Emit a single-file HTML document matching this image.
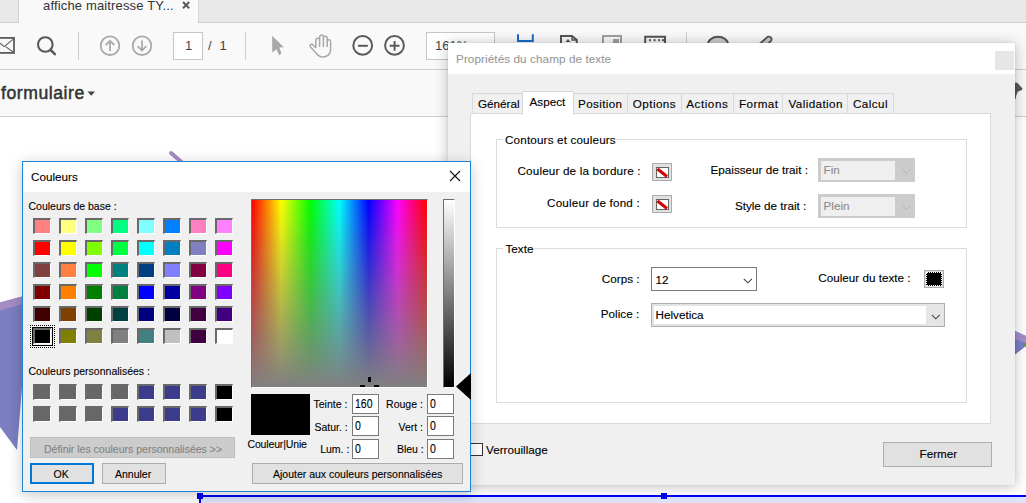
<!DOCTYPE html>
<html><head><meta charset="utf-8">
<style>
*{box-sizing:border-box;margin:0;padding:0}
html,body{width:1026px;height:503px;overflow:hidden;background:#fff;position:relative;font-family:"Liberation Sans",sans-serif;color:#000}
.a{position:absolute}
.t{position:absolute;white-space:pre;line-height:normal}
.f12{font-size:11.7px;-webkit-text-stroke:0.12px currentColor}
.f10{font-size:10.5px;-webkit-text-stroke:0.1px currentColor}
.sw{width:18px;height:16px;border-top:2px solid #696969;border-left:2px solid #696969;border-right:1px solid #fff;border-bottom:1px solid #fff}
.dg{transform:scaleY(1.2);transform-origin:0 9.5px}
.inp{width:27px;height:20px;background:#fff;border:1px solid #7a7a7a}
</style></head><body>
<!-- ===== background app ===== -->
<div class="a" style="left:0;top:0;width:1026px;height:23px;background:#e8e8e8"></div>
<div class="a" style="left:0;top:22px;width:1026px;height:1px;background:#cfcfcf"></div>
<div class="a" style="left:18px;top:0;width:1px;height:22px;background:#d2d2d2"></div>
<div class="a" style="left:19px;top:0;width:179px;height:23px;background:#f9f9f9"></div>
<div class="a" style="left:198px;top:0;width:1px;height:22px;background:#d6d6d6"></div>
<div class="t" style="left:43px;top:-2px;font-size:13px;color:#333;letter-spacing:0.155px">affiche maitresse TY...</div>
<svg class="a" style="left:180.5px;top:-0.5px" width="10" height="10"><path d="M2 2 L8.2 8.2 M8.2 2 L2 8.2" stroke="#5a5a5a" stroke-width="2"/></svg>
<div class="a" style="left:0;top:23px;width:1026px;height:46px;background:#f9f9f9"></div>
<div class="a" style="left:0;top:69px;width:1026px;height:1px;background:#cdcdcd"></div>
<div class="a" style="left:0;top:70px;width:1026px;height:46px;background:#f9f9f9"></div>
<div class="a" style="left:0;top:116px;width:1026px;height:1px;background:#cdcdcd"></div>
<div class="t" style="left:1px;top:83px;font-size:17.6px;color:#333;-webkit-text-stroke:0.5px #333;letter-spacing:0.55px">formulaire</div>
<svg class="a" style="left:86.5px;top:91px" width="9" height="6"><polygon points="0.5,0.5 8,0.5 4.25,4.8" fill="#444"/></svg>

<!-- toolbar icons -->
<svg class="a" style="left:0;top:0" width="1026" height="117">
 <g fill="none" stroke="#5c5c5c" stroke-width="1.8">
  <rect x="-6" y="37.9" width="20" height="15" />
 </g>
 <g fill="none" stroke="#5c5c5c" stroke-width="1.1">
  <path d="M13.5 38.8 L4.2 46.6 L0 43.2 M5.6 46.6 L13.5 52.2"/>
 </g>
 <circle cx="45.3" cy="44.5" r="7.3" fill="none" stroke="#5a5a5a" stroke-width="2.1"/>
 <path d="M50.5 49.8 L54.8 54.2" stroke="#5a5a5a" stroke-width="2.6" stroke-linecap="round"/>
 <rect x="78" y="32" width="1" height="28" fill="#cfcfcf"/>
 <g fill="none" stroke="#a9a9a9" stroke-width="1.8">
  <circle cx="110" cy="45.7" r="9.3"/>
  <path d="M110 51 V40.8 M105.6 45.2 L110 40.8 L114.4 45.2"/>
  <circle cx="142" cy="45.7" r="9.3"/>
  <path d="M142 40.4 V50.6 M137.6 46.2 L142 50.6 L146.4 46.2"/>
 </g>
 <rect x="173.5" y="32.5" width="29" height="27" fill="#fff" stroke="#c6c6c6"/>
 <rect x="245" y="32" width="1" height="28" fill="#cfcfcf"/>
 <polygon points="272.2,35.8 283.9,47.3 279.4,47.6 281.4,53.4 279,55.4 276.6,49.2 272.2,52.6" fill="#a9a9a9"/>
 <g fill="none" stroke="#a9a9a9" stroke-width="1.5" stroke-linejoin="round">
  <path d="M315.8 48 V40.2 a1.9 1.9 0 0 1 3.8 0 V37 a1.9 1.9 0 0 1 3.8 0 V38.2 a1.9 1.9 0 0 1 3.8 0 V41.5 a1.7 1.7 0 0 1 3.4 0 V50 c0 4.2 -3.6 7 -7.8 7 c-3 0 -5 -1.6 -6.6 -3.8 L310.3 46.8 a1.6 1.6 0 0 1 2.6 -1.9 L315.8 48"/>
  <path d="M319.6 40.2 V47 M323.4 38.2 V47 M327.2 41.5 V47"/>
 </g>
 <g fill="none" stroke="#5a5a5a" stroke-width="2">
  <circle cx="362.7" cy="45.4" r="9.4"/>
  <path d="M358 45.8 H367.8"/>
  <circle cx="394.5" cy="45.4" r="9.4"/>
  <path d="M389.7 45.8 H399.5 M394.6 41 V50.8"/>
 </g>
 <rect x="426.5" y="32.5" width="68" height="27" fill="#fff" stroke="#c6c6c6"/>
 <path d="M518 34.2 V41 H532.8 V34.2" fill="none" stroke="#1a6ac8" stroke-width="2"/>
 <path d="M561 43 V36 H572 L576.8 40 V43" fill="none" stroke="#555" stroke-width="2"/>
 <path d="M572 36 V40 H576.8" fill="none" stroke="#555" stroke-width="1.4"/>
 <polygon points="565.5,42 568,39 570.5,42" fill="#555"/>
 <path d="M603 43 V36 H621 V43" fill="none" stroke="#9f9f9f" stroke-width="2"/>
 <rect x="613" y="39" width="6" height="4" fill="#9f9f9f"/>
 <path d="M645.2 43.5 V36.8 H665 V43.5" fill="none" stroke="#555" stroke-width="2"/>
 <g fill="#555"><rect x="649" y="39.2" width="2" height="2"/><rect x="653.6" y="39.2" width="2" height="2"/><rect x="658.2" y="39.2" width="2" height="2"/><rect x="662" y="39.2" width="2" height="2"/></g>
 <rect x="686" y="32" width="1" height="12" fill="#cfcfcf"/>
 <path d="M708 44.5 A10 7.8 0 0 1 728 44.5" fill="#cdcdcd" stroke="#555" stroke-width="2"/>
 <path d="M759 44.5 L766.5 37.8 A2.5 2.5 0 0 1 771 40.8 L767 44.5" fill="#cdcdcd" stroke="#555" stroke-width="1.8"/>
 <polygon points="1015,82.4 1017.2,82.8 1022.5,88.4 1022,90 1018,91.4 1016.4,95 1015.6,99.2 1015,99.2" fill="#585858"/>
</svg>
<div class="t" style="left:185px;top:38px;font-size:13px;color:#444">1</div>
<div class="t" style="left:208px;top:38px;font-size:13px;color:#444">/</div>
<div class="t" style="left:219.5px;top:38px;font-size:13px;color:#444">1</div>
<div class="t" style="left:435px;top:38px;font-size:13px;color:#444">161%</div>

<!-- purple shapes -->
<svg class="a" style="left:0;top:117px" width="1026" height="386">
  <polygon points="0,185.4 29.4,177.5 17,333 0,310" fill="#7b7ec0"/>
  <polygon points="0,185.4 29.4,177.5 29.4,185 0,193.7" fill="#a48cc4"/>
  <path d="M171 36 L181.5 45" stroke="#a58bc8" stroke-width="4" stroke-linecap="round"/>
  <polygon points="1010,211.7 1026,219 1026,229 1010,241.4" fill="#7680c6"/>
  <polygon points="1010,211.7 1026,219 1026,226 1010,220.2" fill="#a38dc8"/>
  <polygon points="1023.5,226.3 1026,226 1026,229.5 1023.5,229" fill="#5c9c48"/>
</svg>
<!-- selection bottom -->
<div class="a" style="left:201px;top:497px;width:825px;height:6px;background:#dce3fa"></div>
<div class="a" style="left:200px;top:495px;width:826px;height:2px;background:#0000f4"></div>
<div class="a" style="left:199px;top:495px;width:2px;height:8px;background:#0000f4"></div>
<div class="a" style="left:197px;top:493px;width:6px;height:6px;background:#0000f4"></div>
<div class="a" style="left:661px;top:493px;width:6px;height:6px;background:#0000f4"></div>

<!-- ===== properties dialog ===== -->
<div id="pd" class="a" style="left:448px;top:43px;width:567px;height:442px;background:#f0f0f0;box-shadow:0 0 2px rgba(0,0,0,0.10),0 1px 13px rgba(0,0,0,0.26)">
  <div class="a" style="left:0;top:0;width:567px;height:31px;background:#fff"></div>
  <div class="t f12" style="left:8px;top:9px;color:#999;letter-spacing:0.09px">Propriétés du champ de texte</div>
  <div class="a" style="left:547px;top:8px;width:19px;height:19px;background:#e6e6e6"></div>
</div>

<!-- PD content -->
<div class="a" style="left:470px;top:113px;width:521px;height:311px;background:#fff;border:1px solid #d9d9d9"></div>
<div class="a" style="left:472px;top:93px;width:51px;height:21px;background:#f0f0f0;border:1px solid #d9d9d9"></div>
<div class="t f12" style="left:478.0px;top:97px">Général</div>
<div class="a" style="left:573px;top:93px;width:55px;height:21px;background:#f0f0f0;border:1px solid #d9d9d9"></div>
<div class="t f12" style="left:578.1px;top:97px;letter-spacing:0.35px">Position</div>
<div class="a" style="left:627px;top:93px;width:55px;height:21px;background:#f0f0f0;border:1px solid #d9d9d9"></div>
<div class="t f12" style="left:632.7px;top:97px;letter-spacing:0.45px">Options</div>
<div class="a" style="left:681px;top:93px;width:53px;height:21px;background:#f0f0f0;border:1px solid #d9d9d9"></div>
<div class="t f12" style="left:686.2px;top:97px;letter-spacing:0.55px">Actions</div>
<div class="a" style="left:733px;top:93px;width:50px;height:21px;background:#f0f0f0;border:1px solid #d9d9d9"></div>
<div class="t f12" style="left:739.0px;top:97px;letter-spacing:0.4px">Format</div>
<div class="a" style="left:782px;top:93px;width:66px;height:21px;background:#f0f0f0;border:1px solid #d9d9d9"></div>
<div class="t f12" style="left:788.5px;top:97px;letter-spacing:0.38px">Validation</div>
<div class="a" style="left:847px;top:93px;width:47px;height:21px;background:#f0f0f0;border:1px solid #d9d9d9"></div>
<div class="t f12" style="left:853.0px;top:97px;letter-spacing:0.4px">Calcul</div>
<div class="a" style="left:522px;top:91px;width:52px;height:24px;background:#fff;border:1px solid #d9d9d9;border-bottom:none"></div>
<div class="t f12" style="left:529.5px;top:95px">Aspect</div>
<div class="a" style="left:496px;top:139px;width:471px;height:89px;border:1px solid #dcdcdc"></div>
<div class="a" style="left:503px;top:132px;width:113px;height:14px;background:#fff"></div>
<div class="t f12" style="left:505px;top:133px;letter-spacing:0.15px">Contours et couleurs</div>
<div class="a" style="left:496px;top:248px;width:471px;height:155px;border:1px solid #dcdcdc"></div>
<div class="a" style="left:503px;top:241px;width:31px;height:14px;background:#fff"></div>
<div class="t f12" style="left:505.5px;top:242px">Texte</div>
<div class="t f12" style="left:517.5px;top:164px;letter-spacing:0.16px">Couleur de la bordure :</div>
<div class="t f12" style="left:547px;top:196px;letter-spacing:0.19px">Couleur de fond :</div>
<div class="t f12" style="left:710.5px;top:163px">Epaisseur de trait :</div>
<div class="t f12" style="left:734.9px;top:199px">Style de trait :</div>
<div class="t f12" style="left:601.8px;top:271.5px">Corps :</div>
<div class="t f12" style="left:600.8px;top:307px">Police :</div>
<div class="t f12" style="left:818.3px;top:271px">Couleur du texte :</div>
<div class="t f12" style="left:486px;top:443px">Verrouillage</div>
<div class="a" style="left:652px;top:163px;width:20px;height:18px;background:#e1e1e1;border:1px solid #adadad"></div>
<svg class="a" style="left:656px;top:167px" width="13" height="11"><rect x="0.5" y="0.5" width="12" height="10" fill="#fff" stroke="#666"/><path d="M1.5 2 L11 9.5" stroke="#d00000" stroke-width="3"/></svg>
<div class="a" style="left:652px;top:195px;width:20px;height:18px;background:#e1e1e1;border:1px solid #adadad"></div>
<svg class="a" style="left:656px;top:199px" width="13" height="11"><rect x="0.5" y="0.5" width="12" height="10" fill="#fff" stroke="#666"/><path d="M1.5 2 L11 9.5" stroke="#d00000" stroke-width="3"/></svg>
<div class="a" style="left:924px;top:270px;width:20px;height:18px;background:#e1e1e1;border:1px solid #adadad"></div>
<div class="a" style="left:926px;top:272px;width:16px;height:14px;background:#000;outline:1px dotted #fff;outline-offset:-1px"></div>
<div class="a" style="left:818px;top:158px;width:97px;height:24px;background:#cccccc"></div>
<div class="a" style="left:821px;top:161px;width:74px;height:19px;background:#efefef"></div>
<div class="t f12" style="left:823.5px;top:163px;color:#8d8d8d">Fin</div>
<svg class="a" style="left:902px;top:168.5px" width="9" height="5"><path d="M0.5 0.5 L4.5 4.5 L8.5 0.5" fill="none" stroke="#b4b4b4" stroke-width="1"/></svg>
<div class="a" style="left:818px;top:194px;width:97px;height:24px;background:#cccccc"></div>
<div class="a" style="left:821px;top:197px;width:74px;height:19px;background:#efefef"></div>
<div class="t f12" style="left:823.5px;top:199px;color:#8d8d8d">Plein</div>
<svg class="a" style="left:902px;top:204.5px" width="9" height="5"><path d="M0.5 0.5 L4.5 4.5 L8.5 0.5" fill="none" stroke="#b4b4b4" stroke-width="1"/></svg>
<div class="a" style="left:651px;top:267px;width:106px;height:24px;background:#fff;border:1px solid #7a7a7a"></div>
<div class="t f12" style="left:655.5px;top:272.5px">12</div>
<svg class="a" style="left:743px;top:277.5px" width="10" height="6"><path d="M0.8 0.8 L4.8 4.8 L8.8 0.8" fill="none" stroke="#444" stroke-width="1.1"/></svg>
<div class="a" style="left:651px;top:303px;width:294px;height:24px;background:#fff;border:1px solid #adadad;box-shadow:inset 0 0 0 2px #e3e3e3"></div>
<div class="a" style="left:926px;top:305px;width:17px;height:20px;background:#e5e5e5"></div>
<div class="t f12" style="left:655.5px;top:308px">Helvetica</div>
<svg class="a" style="left:931px;top:313.5px" width="10" height="6"><path d="M0.8 0.8 L4.8 4.8 L8.8 0.8" fill="none" stroke="#444" stroke-width="1.1"/></svg>
<div class="a" style="left:470px;top:443px;width:13px;height:13px;background:#fff;border:1px solid #333"></div>
<div class="a" style="left:883px;top:442px;width:109px;height:25px;background:#e1e1e1;border:1px solid #adadad"></div>
<div class="t f12" style="left:919.5px;top:447px">Fermer</div>

<!-- ===== colors dialog ===== -->
<div id="cd" class="a" style="left:22px;top:161px;width:449px;height:331px;background:#f0f0f0;border:1px solid #1f83d6;box-shadow:0 3px 14px rgba(0,0,0,0.22)">
  <div class="a" style="left:0;top:0;width:447px;height:30px;background:#fff"></div>
  </div>
<!-- CD content -->
<div class="t f12" style="left:31px;top:170px">Couleurs</div>
<svg class="a" style="left:449px;top:170px" width="12" height="12"><path d="M1 1 L11 11 M11 1 L1 11" stroke="#111" stroke-width="1.1"/></svg>
<div class="t f10" style="left:28.5px;top:200px">Couleurs de base :</div>
<div class="a sw" style="left:33px;top:218px;background:#FF8080"></div>
<div class="a sw" style="left:59px;top:218px;background:#FFFF80"></div>
<div class="a sw" style="left:85px;top:218px;background:#80FF80"></div>
<div class="a sw" style="left:111px;top:218px;background:#00FF80"></div>
<div class="a sw" style="left:137px;top:218px;background:#80FFFF"></div>
<div class="a sw" style="left:163px;top:218px;background:#0080FF"></div>
<div class="a sw" style="left:189px;top:218px;background:#FF80C0"></div>
<div class="a sw" style="left:215px;top:218px;background:#FF80FF"></div>
<div class="a sw" style="left:33px;top:240px;background:#FF0000"></div>
<div class="a sw" style="left:59px;top:240px;background:#FFFF00"></div>
<div class="a sw" style="left:85px;top:240px;background:#80FF00"></div>
<div class="a sw" style="left:111px;top:240px;background:#00FF40"></div>
<div class="a sw" style="left:137px;top:240px;background:#00FFFF"></div>
<div class="a sw" style="left:163px;top:240px;background:#0080C0"></div>
<div class="a sw" style="left:189px;top:240px;background:#8080C0"></div>
<div class="a sw" style="left:215px;top:240px;background:#FF00FF"></div>
<div class="a sw" style="left:33px;top:262px;background:#804040"></div>
<div class="a sw" style="left:59px;top:262px;background:#FF8040"></div>
<div class="a sw" style="left:85px;top:262px;background:#00FF00"></div>
<div class="a sw" style="left:111px;top:262px;background:#008080"></div>
<div class="a sw" style="left:137px;top:262px;background:#004080"></div>
<div class="a sw" style="left:163px;top:262px;background:#8080FF"></div>
<div class="a sw" style="left:189px;top:262px;background:#800040"></div>
<div class="a sw" style="left:215px;top:262px;background:#FF0080"></div>
<div class="a sw" style="left:33px;top:284px;background:#800000"></div>
<div class="a sw" style="left:59px;top:284px;background:#FF8000"></div>
<div class="a sw" style="left:85px;top:284px;background:#008000"></div>
<div class="a sw" style="left:111px;top:284px;background:#008040"></div>
<div class="a sw" style="left:137px;top:284px;background:#0000FF"></div>
<div class="a sw" style="left:163px;top:284px;background:#0000A0"></div>
<div class="a sw" style="left:189px;top:284px;background:#800080"></div>
<div class="a sw" style="left:215px;top:284px;background:#8000FF"></div>
<div class="a sw" style="left:33px;top:306px;background:#400000"></div>
<div class="a sw" style="left:59px;top:306px;background:#804000"></div>
<div class="a sw" style="left:85px;top:306px;background:#004000"></div>
<div class="a sw" style="left:111px;top:306px;background:#004040"></div>
<div class="a sw" style="left:137px;top:306px;background:#000080"></div>
<div class="a sw" style="left:163px;top:306px;background:#000040"></div>
<div class="a sw" style="left:189px;top:306px;background:#400040"></div>
<div class="a sw" style="left:215px;top:306px;background:#400080"></div>
<div class="a sw" style="left:33px;top:328px;background:#000000"></div>
<div class="a sw" style="left:59px;top:328px;background:#808000"></div>
<div class="a sw" style="left:85px;top:328px;background:#808040"></div>
<div class="a sw" style="left:111px;top:328px;background:#808080"></div>
<div class="a sw" style="left:137px;top:328px;background:#408080"></div>
<div class="a sw" style="left:163px;top:328px;background:#C0C0C0"></div>
<div class="a sw" style="left:189px;top:328px;background:#400040"></div>
<div class="a sw" style="left:215px;top:328px;background:#FFFFFF"></div>
<div class="a" style="left:32px;top:327px;width:21px;height:19px;border:1px solid #000"></div>
<div class="a" style="left:30px;top:325px;width:25px;height:23px;border:1px dotted #000"></div>
<div class="t f10" style="left:28.5px;top:365px">Couleurs personnalisées :</div>
<div class="a sw" style="left:33px;top:384px;background:#676767"></div>
<div class="a sw" style="left:59px;top:384px;background:#676767"></div>
<div class="a sw" style="left:85px;top:384px;background:#676767"></div>
<div class="a sw" style="left:111px;top:384px;background:#676767"></div>
<div class="a sw" style="left:137px;top:384px;background:#3c3c8c"></div>
<div class="a sw" style="left:163px;top:384px;background:#3c3c8c"></div>
<div class="a sw" style="left:189px;top:384px;background:#3c3c8c"></div>
<div class="a sw" style="left:215px;top:384px;background:#000000"></div>
<div class="a sw" style="left:33px;top:406px;background:#676767"></div>
<div class="a sw" style="left:59px;top:406px;background:#676767"></div>
<div class="a sw" style="left:85px;top:406px;background:#676767"></div>
<div class="a sw" style="left:111px;top:406px;background:#3c3c8c"></div>
<div class="a sw" style="left:137px;top:406px;background:#3c3c8c"></div>
<div class="a sw" style="left:163px;top:406px;background:#3c3c8c"></div>
<div class="a sw" style="left:189px;top:406px;background:#3c3c8c"></div>
<div class="a sw" style="left:215px;top:406px;background:#000000"></div>
<div class="a" style="left:30px;top:437px;width:205px;height:21px;background:#cccccc;border:1px solid #bfbfbf"></div>
<div class="t f10" style="left:44px;top:443px;color:#838383">Définir les couleurs personnalisées &gt;&gt;</div>
<div class="a" style="left:30px;top:463px;width:64px;height:21px;background:#e1e1e1;border:2px solid #0078d7"></div>
<div class="t f10" style="left:53.5px;top:468px">OK</div>
<div class="a" style="left:102px;top:463px;width:64px;height:21px;background:#e1e1e1;border:1px solid #adadad"></div>
<div class="t f10" style="left:115px;top:468px">Annuler</div>
<div class="a" style="left:251px;top:199px;width:177px;height:189px;border-top:1px solid #6d6d6d;border-left:1px solid #6d6d6d;border-right:1px solid #fff;border-bottom:1px solid #fff;background:linear-gradient(to bottom,rgba(128,128,128,0),rgba(128,128,128,1)),linear-gradient(to right,#f00,#ff0 16.67%,#0f0 33.33%,#0ff 50%,#00f 66.67%,#f0f 83.33%,#f00)"></div>
<div class="a" style="left:368px;top:377px;width:3px;height:5px;background:#000"></div>
<div class="a" style="left:360px;top:385px;width:5px;height:2px;background:#000"></div>
<div class="a" style="left:374px;top:385px;width:5px;height:2px;background:#000"></div>
<div class="a" style="left:443px;top:199px;width:12px;height:189px;border-top:1px solid #6d6d6d;border-left:1px solid #6d6d6d;border-right:1px solid #fff;border-bottom:1px solid #fff;background:linear-gradient(to bottom,#fff,#000)"></div>
<svg class="a" style="left:456px;top:373px" width="15" height="27"><polygon points="0,13.5 15,0 15,27" fill="#000"/></svg>
<div class="a" style="left:251px;top:394px;width:59px;height:41px;background:#000"></div>
<div class="t f10" style="left:247.5px;top:438px;letter-spacing:-0.15px">Couleur|Unie</div>
<div class="t f10" style="left:313.5px;top:398px">Teinte :</div>
<div class="t f10" style="left:314.5px;top:421px">Satur. :</div>
<div class="t f10" style="left:320.2px;top:443px">Lum. :</div>
<div class="t f10" style="left:386.1px;top:398px">Rouge :</div>
<div class="t f10" style="left:398.5px;top:421px">Vert :</div>
<div class="t f10" style="left:396.9px;top:443px">Bleu :</div>
<div class="a inp" style="left:352px;top:394px"></div><div class="t f10 dg" style="left:355px;top:398px">160</div>
<div class="a inp" style="left:427px;top:394px"></div><div class="t f10 dg" style="left:430px;top:398px">0</div>
<div class="a inp" style="left:352px;top:416px"></div><div class="t f10 dg" style="left:355px;top:420px">0</div>
<div class="a inp" style="left:427px;top:416px"></div><div class="t f10 dg" style="left:430px;top:420px">0</div>
<div class="a inp" style="left:352px;top:439px"></div><div class="t f10 dg" style="left:355px;top:443px">0</div>
<div class="a inp" style="left:427px;top:439px"></div><div class="t f10 dg" style="left:430px;top:443px">0</div>
<div class="a" style="left:252px;top:463px;width:211px;height:21px;background:#e1e1e1;border:1px solid #adadad"></div>
<div class="t f10" style="left:273px;top:468px">Ajouter aux couleurs personnalisées</div>
</body></html>
